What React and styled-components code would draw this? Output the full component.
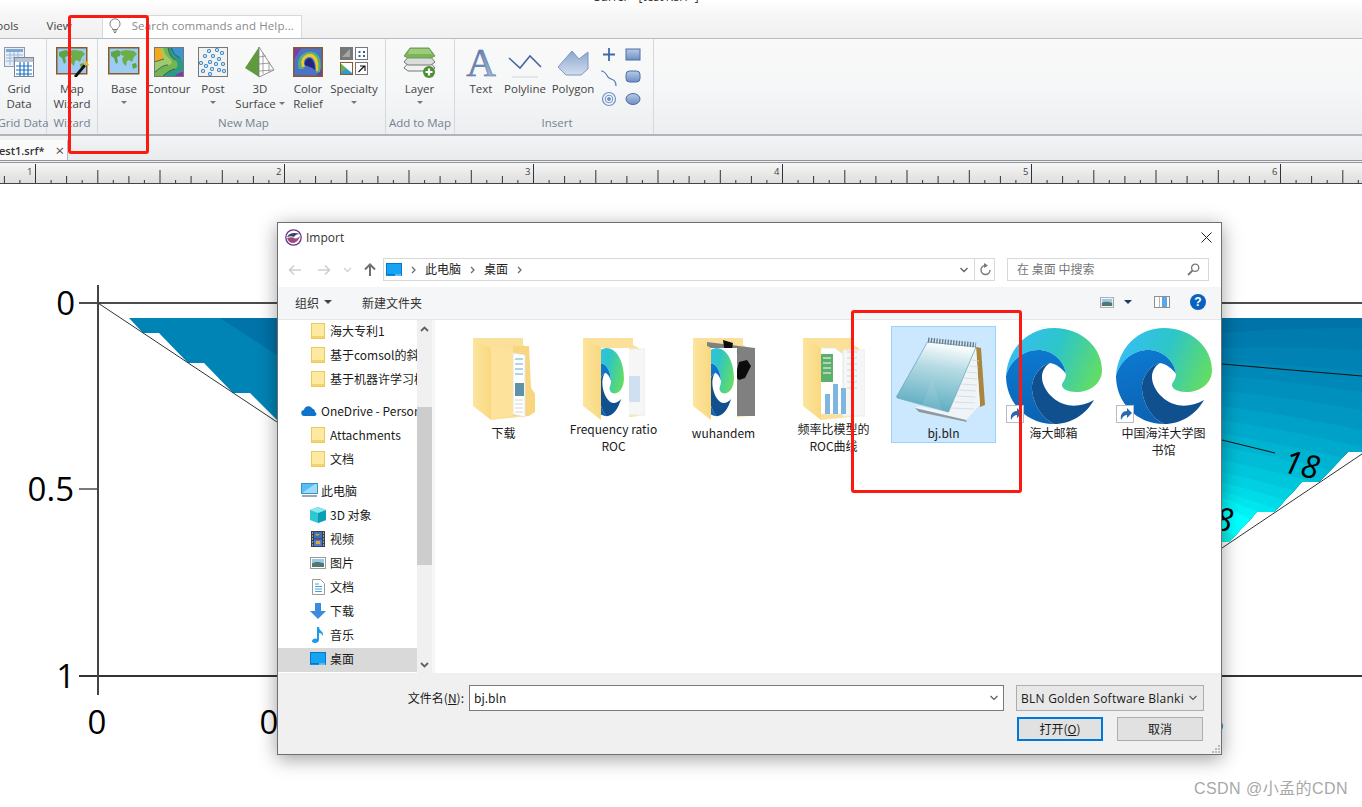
import React from 'react';
import styled, { createGlobalStyle } from 'styled-components';

const UI_FONT = '"Open Sans", "Noto Sans", "Noto Sans CJK SC", sans-serif';

const Global = createGlobalStyle`
    html, body {
        margin: 0;
        padding: 0;
        background: #fff;
        overflow: hidden;
    }
    * { box-sizing: border-box; }
    svg { display: block; flex: none; }
`;

/* ---------- little drawings ---------- */

const GridDataIcon = () => (
    <svg width="30" height="30" viewBox="0 0 30 30">
        <rect x="0.5" y="0.5" width="20" height="19" fill="#e8eef5" stroke="#8d99a8" />
        <rect x="2" y="2" width="17" height="3" fill="#7ea7d8" />
        <path d="M2 8h17M2 11h17M2 14h17M6 5v13M10 5v13M14 5v13" stroke="#9db9dc" />
        <rect x="10.5" y="10.5" width="19" height="19" fill="#fff" stroke="#7b8794" />
        <rect x="11" y="11" width="18" height="4" fill="#b9c4d0" />
        <path d="M12 19h16M12 23h16M12 27h16M16 15v14M20 15v14M24 15v14" stroke="#1d74c4" strokeWidth="1.2" />
    </svg>
);

const MapArt = () => (
    <>
        <rect x="0.75" y="0.75" width="30" height="26" fill="#9ccbf3" stroke="#8a5a2c" strokeWidth="1.5" />
        <path d="M3 5l7-2 3 2-1 4-3 1 1 5-2 2-2-6-3-2z" fill="#5fa443" />
        <path d="M13 4l5-1 8 1 3 3-3 3-2 5-3-2-2 1-1 5-3-3-1-4 2-3-3-1z" fill="#6cae48" />
        <path d="M24 17l4-1 1 4-4 2z" fill="#5fa443" />
    </>
);

const BaseMapIcon = () => (
    <svg width="32" height="28" viewBox="0 0 32 28"><MapArt /></svg>
);

const WizardIcon = () => (
    <WizardShift>
        <svg width="34" height="30" viewBox="0 0 34 30">
            <MapArt />
            <path d="M18 29l10-12 2 2-10 12z" fill="#111" />
            <path d="M27 17l3-3 2 2-2 3z" fill="#e8b428" />
            <path d="M27 12l1 2M32 13l-1 2M33 18l-2-1" stroke="#eeb020" />
        </svg>
    </WizardShift>
);

const ContourIcon = () => (
    <svg width="30" height="30" viewBox="0 0 30 30">
        <rect width="30" height="30" fill="#3d94cf" />
        <path d="M0 0h17c2 6 4 8 9 11 4 3 4 9 4 19H0z" fill="#2a9a85" />
        <path d="M0 0h14c1 7 3 10 7 13 4 3 3 8 0 9-5 1-9 4-13 8H0z" fill="#72b652" />
        <path d="M0 0h9c1 6 3 9 7 12 3 3 2 6-2 6-5 0-8 3-14 8z" fill="#9ecb6d" />
        <path d="M0 0h7c0 6 2 9 3 12-4 1-6 2-10 3z" fill="#f6a81c" />
        <path d="M20 30c2-3 6-5 10-5v5z" fill="#8f2cb8" />
        <path d="M0 15c4-1 6-2 10-3M0 26c6-5 9-8 14-8M8 30c4-4 8-7 13-8M14 0c1 7 3 10 7 13M17 0c2 6 4 8 9 11" stroke="#33495c" strokeWidth="0.8" fill="none" />
        <rect x="0.5" y="0.5" width="29" height="29" fill="none" stroke="#777" />
    </svg>
);

const PostIcon = () => {
    const dots = [[11, 4], [19, 3], [24, 6], [7, 9], [15, 9], [21, 12], [12, 15], [3, 16], [8, 19], [18, 17], [25, 17], [5, 24], [14, 22], [21, 23], [26, 24], [12, 27]];
    return (
        <svg width="30" height="30" viewBox="0 0 30 30">
            <rect x="0.5" y="0.5" width="29" height="29" fill="#f1f1ef" stroke="#777" />
            {dots.map(([x, y]) => (
                <circle key={x + '-' + y} cx={x} cy={y} r="1.5" fill="#fff" stroke="#2a80c8" strokeWidth="1.1" />
            ))}
        </svg>
    );
};

const SurfaceIcon = () => (
    <svg width="32" height="32" viewBox="0 0 32 32">
        <path d="M15 0L1 21l14 9z" fill="#5f9a3c" />
        <path d="M15 0l15 23-15 7z" fill="#fff" stroke="#777" strokeWidth="0.8" />
        <path d="M15 10l7-1M15 17l11-1M15 24l14-1M19 6v21M25 15v10" fill="none" stroke="#8a8a8a" strokeWidth="0.8" />
    </svg>
);

const ReliefIcon = () => (
    <svg width="30" height="30" viewBox="0 0 30 30">
        <rect width="30" height="30" fill="#3d5fc0" />
        <path d="M0 0h30v30H0z" fill="#4c72c8" />
        <path d="M0 0h9L0 14z" fill="#7a3fae" />
        <path d="M22 30l8-10v10z" fill="#6a3fb4" />
        <path d="M6 22C2 10 12 3 20 5c7 2 9 10 7 20l-4 1C24 16 22 9 16 9 10 10 9 16 11 22z" fill="#55b07a" />
        <path d="M9 20C6 11 13 6 19 7c6 2 7 9 6 17l-2 0C23 15 21 10 16 10 11 11 10 15 12 20z" fill="#e9c932" />
        <path d="M12 18c-1-4 2-7 5-7 3 1 5 6 5 12-3-3-6-3-10-5z" fill="#24267e" />
        <rect x="0.75" y="0.75" width="28.5" height="28.5" fill="none" stroke="#8a5a2c" strokeWidth="1.5" />
    </svg>
);

const SpecialtyIcon = () => (
    <svg width="29" height="28" viewBox="0 0 29 28">
        <rect x="0.5" y="0.5" width="12" height="12" fill="#777" stroke="#777" />
        <path d="M2 10l8-8v8z" fill="#a6a6a6" />
        <rect x="15.5" y="0.5" width="12" height="12" fill="#fff" stroke="#777" />
        <path d="M18.5 4h2v2h-2zM23 4h2v2h-2zM18.5 8h2v2h-2zM23 8h2v2h-2z" fill="#2268a8" />
        <rect x="0.5" y="15.5" width="12" height="12" fill="#fff" stroke="#8a5a2c" />
        <path d="M1 17l11 9v1H1z" fill="#2f9ad2" />
        <path d="M1 17l6 5-6 3z" fill="#6cb24a" />
        <rect x="15.5" y="15.5" width="12" height="12" fill="#fff" stroke="#777" />
        <path d="M18.5 25l6-6M20 19h5v5" stroke="#111" fill="none" strokeWidth="1.1" />
    </svg>
);

const LayerIcon = () => (
    <svg width="33" height="32" viewBox="0 0 33 32">
        <path d="M1 21l6-7h19l6 7-4 3H5z" fill="#f1f1f1" stroke="#777" />
        <path d="M1 15l6-7h19l6 7-4 3H5z" fill="#dcdcdc" stroke="#777" />
        <path d="M1 9l6-8h19l6 8-4 2H5z" fill="#7cb45a" stroke="#6d9c52" />
        <path d="M7 2h19l3 5H5z" fill="#9ccc7c" />
        <circle cx="26" cy="25" r="6" fill="#4f8f34" />
        <path d="M26 21.5v7M22.5 25h7" stroke="#fff" strokeWidth="2.2" />
    </svg>
);

const TextIcon = () => (
    <svg width="32" height="32" viewBox="0 0 32 32">
        <defs>
            <linearGradient id="glyph" x1="0" y1="0" x2="1" y2="1">
                <stop offset="0" stopColor="#3f5f98" />
                <stop offset="1" stopColor="#b6c8e4" />
            </linearGradient>
        </defs>
        <text x="16" y="29" textAnchor="middle" fontFamily='"Liberation Serif", serif' fontSize="41" fontWeight="400" fill="url(#glyph)" stroke="#466a9f" strokeWidth="0.5">A</text>
    </svg>
);

const PolylineIcon = () => (
    <svg width="34" height="32" viewBox="0 0 34 32">
        <path d="M1 11l11 10L22 9l11 11" fill="none" stroke="#46689e" strokeWidth="1.6" />
        <path d="M4 30h26" stroke="#dfe1e4" strokeWidth="1.5" />
    </svg>
);

const PolygonIcon = () => (
    <svg width="32" height="32" viewBox="0 0 32 32">
        <defs>
            <linearGradient id="poly" x1="0" y1="0" x2="0" y2="1">
                <stop offset="0" stopColor="#8ca5cf" />
                <stop offset="1" stopColor="#d2deef" />
            </linearGradient>
        </defs>
        <path d="M1 20L15 4l7 8 9-7v17l-7 6H9z" fill="url(#poly)" stroke="#7d97c2" />
    </svg>
);

const SmallShape = ({ kind }) => (
    <svg width="18" height="18" viewBox="0 0 18 18">
        <defs>
            <linearGradient id="shape" x1="0" y1="0" x2="0" y2="1">
                <stop offset="0" stopColor="#b8c9e6" />
                <stop offset="1" stopColor="#6f8fc4" />
            </linearGradient>
        </defs>
        {kind === 'plus' && <path d="M9 1v13M3 7.5h12" stroke="#3f6aa8" strokeWidth="1.8" />}
        {kind === 'curve' && <path d="M1 2c4 0 5 3 7 6s8 1 8 9" fill="none" stroke="#5578ad" strokeWidth="1.2" />}
        {kind === 'rings' && (
            <g fill="none" stroke="#6f92c8">
                <circle cx="9" cy="8" r="6.5" strokeWidth="1.2" />
                <circle cx="9" cy="8" r="3.8" />
                <circle cx="9" cy="8" r="1.5" fill="#6f92c8" />
            </g>
        )}
        {kind === 'rect' && <rect x="2" y="2" width="14" height="11" fill="url(#shape)" stroke="#4c6ea6" />}
        {kind === 'round' && <rect x="2" y="2" width="14" height="11" rx="3.5" fill="url(#shape)" stroke="#4c6ea6" />}
        {kind === 'oval' && <ellipse cx="9" cy="8" rx="7" ry="5.5" fill="url(#shape)" stroke="#4c6ea6" />}
    </svg>
);

const BulbIcon = () => (
    <svg width="12" height="15" viewBox="0 0 12 15">
        <path d="M3.5 10.5C2 9 1 8 1 5.8A5 5 0 0 1 11 5.8c0 2.2-1 3.2-2.5 4.7v1h-5zM4 13h4M5 14.5h2" fill="none" stroke="#7b7b7b" />
    </svg>
);

const AppLogo = () => (
    <svg width="17" height="17" viewBox="0 0 17 17">
        <circle cx="8.5" cy="8.5" r="7.7" fill="#fff" stroke="#66318c" strokeWidth="1.3" />
        <path d="M2 8c2-4 7-5 13-3-3 0-5 1-6 3-2-1-4-1-7 0z" fill="#39406e" />
        <path d="M2 9c3-1 6-1 7 0 2 1 4 0 6-2-1 4-4 7-7 7-3 0-5-2-6-5z" fill="#a04a78" />
    </svg>
);

const Monitor = ({ w = 16, h = 13 }) => (
    <svg width={w} height={h} viewBox="0 0 16 13">
        <rect width="16" height="13" fill="#0a8fe6" />
        <rect x="0.5" y="0.5" width="15" height="11" fill="#14a3f5" stroke="#0877c4" />
        <path d="M9 12h6" stroke="#cfe9fb" />
    </svg>
);

const PcIcon = () => (
    <svg width="17" height="15" viewBox="0 0 17 15">
        <rect x="0.5" y="0.5" width="16" height="10" fill="#55bdf7" stroke="#3f8fbf" />
        <path d="M1 10L14 1h2v9z" fill="#9bdcfb" />
        <rect x="1" y="12" width="15" height="2" fill="#9aa6b0" />
    </svg>
);

const OneDriveIcon = () => (
    <svg width="17" height="11" viewBox="0 0 17 11">
        <path d="M3.5 11A3 3 0 0 1 3 5a4.5 4.5 0 0 1 8.3-1.5A3.6 3.6 0 0 1 14 7a2.1 2.1 0 0 1 0 4z" fill="#0f74c9" />
    </svg>
);

const TreeFolder = () => (
    <svg width="14" height="16" viewBox="0 0 14 16">
        <rect x="0.5" y="0.5" width="13" height="15" fill="#fdeaa0" stroke="#ecc95c" />
        <rect x="1" y="13" width="12" height="2" fill="#f4d36c" />
    </svg>
);

const CubeIcon = () => (
    <svg width="16" height="16" viewBox="0 0 16 16">
        <path d="M8 0l8 3v10l-8 3-8-3V3z" fill="#2ec7d6" />
        <path d="M8 6l8-3v10l-8 3z" fill="#0c9fb4" />
        <path d="M8 0l8 3-8 3-8-3z" fill="#8ce6ee" />
    </svg>
);

const VideoIcon = () => (
    <svg width="14" height="16" viewBox="0 0 14 16">
        <rect width="14" height="16" fill="#3a3f47" />
        <rect x="3" y="1" width="8" height="6.5" fill="#3d6fc0" />
        <rect x="3" y="8.5" width="8" height="6.5" fill="#4a7fcf" />
        <path d="M4 3l2 2 3-2M5 10h4v3H5z" fill="#e2a63a" />
        <path d="M1 2h1M1 5h1M1 8h1M1 11h1M1 14h1M12 2h1M12 5h1M12 8h1M12 11h1M12 14h1" stroke="#fff" />
    </svg>
);

const PictureIcon = ({ w = 16, h = 12 }) => (
    <svg width={w} height={h} viewBox="0 0 16 12">
        <rect x="0.5" y="0.5" width="15" height="11" fill="#fff" stroke="#9a9a9a" />
        <rect x="2" y="2" width="12" height="4.5" fill="#9fc7ea" />
        <path d="M2 6.5c3-2 7-2 12 0V10H2z" fill="#4d7a6a" />
    </svg>
);

const DocIcon = () => (
    <svg width="13" height="16" viewBox="0 0 13 16">
        <path d="M0.5 0.5h8l4 4v11h-12z" fill="#fff" stroke="#9a9a9a" />
        <path d="M3 5h4M3 7.5h7M3 10h7M3 12.5h7" stroke="#4aa0d8" />
    </svg>
);

const DownloadIcon = () => (
    <svg width="16" height="16" viewBox="0 0 16 16">
        <path d="M5 0h6v8h5l-8 8-8-8h5z" fill="#3a8ddc" />
    </svg>
);

const MusicIcon = () => (
    <svg width="12" height="16" viewBox="0 0 12 16">
        <path d="M5 0h2c0 4 5 4 4 9-1-2-2-3-4-3v7c0 2-2 3-4 3s-3-1-3-2c0-2 3-3 5-2z" fill="#1e9be8" />
    </svg>
);

const Chevron = ({ up, color = '#555', w = 9, h = 6, sw = 1.4 }) => (
    <svg width={w} height={h} viewBox="0 0 9 6">
        <path d={up ? 'M1 5l3.5-3.5L8 5' : 'M1 1l3.5 3.5L8 1'} fill="none" stroke={color} strokeWidth={sw} />
    </svg>
);

const SmallArrow = ({ dir, color }) => (
    <svg width="14" height="12" viewBox="0 0 14 12">
        <path d={dir === 'left' ? 'M13 6H2M6 1.5L1.5 6 6 10.5' : dir === 'right' ? 'M1 6h11M8 1.5L12.5 6 8 10.5' : ''} fill="none" stroke={color} strokeWidth="1.6" />
    </svg>
);

const UpArrow = () => (
    <svg width="12" height="13" viewBox="0 0 12 13">
        <path d="M6 13V2M1 6.5L6 1.5l5 5" fill="none" stroke="#6f6f6f" strokeWidth="2" />
    </svg>
);

const CrumbArrow = () => (
    <svg width="5" height="8" viewBox="0 0 5 8">
        <path d="M1 1l3 3-3 3" fill="none" stroke="#6d6d6d" strokeWidth="1.3" />
    </svg>
);

const RefreshIcon = () => (
    <svg width="12" height="13" viewBox="0 0 12 13">
        <path d="M6.5 2.5A4.5 4.5 0 1 0 11 7" fill="none" stroke="#777" strokeWidth="1.4" />
        <path d="M5 0l4 2.5L5 5z" fill="#777" />
    </svg>
);

const SearchGlass = () => (
    <svg width="13" height="13" viewBox="0 0 13 13">
        <circle cx="8.2" cy="4.8" r="3.6" fill="none" stroke="#777" strokeWidth="1.3" />
        <path d="M5.5 7.5L1 12" stroke="#777" strokeWidth="1.8" />
    </svg>
);

const PaneIcon = () => (
    <svg width="16" height="12" viewBox="0 0 16 12">
        <rect x="0.5" y="0.5" width="15" height="11" fill="#fff" stroke="#8f8f8f" />
        <rect x="8" y="1" width="5" height="10" fill="#5aa6e6" />
        <path d="M5.5 1v10" stroke="#b5b5b5" />
    </svg>
);

const HelpIcon = () => (
    <svg width="16" height="16" viewBox="0 0 16 16">
        <circle cx="8" cy="8" r="8" fill="#0a62c0" />
        <text x="8" y="12.2" textAnchor="middle" fontFamily='"Liberation Sans", sans-serif' fontSize="12" fontWeight="700" fill="#fff">?</text>
    </svg>
);

const CloseIcon = () => (
    <svg width="11" height="11" viewBox="0 0 11 11">
        <path d="M0.5 0.5l10 10M10.5 0.5l-10 10" stroke="#222" />
    </svg>
);

/* the three parts of the browser logo, on a 96 unit square */
const EdgeArt = ({ id }) => (
    <>
        <defs>
            <linearGradient id={`${id}a`} x1="0" y1="0.3" x2="1" y2="0.6">
                <stop offset="0" stopColor="#36bdf6" />
                <stop offset="0.5" stopColor="#2dc6c8" />
                <stop offset="1" stopColor="#62dc66" />
            </linearGradient>
            <linearGradient id={`${id}b`} x1="0.2" y1="0" x2="0.4" y2="1">
                <stop offset="0" stopColor="#0c7ad2" />
                <stop offset="1" stopColor="#0c62b2" />
            </linearGradient>
        </defs>
        <path d="M0 48C2 20 22 0 48 0c28 0 48 20 48 42 0 14-12 22-26 22-8 0-14-3-14-7 0-3 4-5 4-11-2-14-14-24-28-24C20 22 5 30 0 48z" fill={`url(#${id}a)`} />
        <path d="M0 48C5 30 20 22 32 22c14 0 26 10 28 24-4-6-10-10-16-11-10 2-19 15-18 27 2 16 10 28 22 34C20 96 0 74 0 48z" fill={`url(#${id}b)`} />
        <path d="M44 35C34 37 25 50 26 62c2 16 10 28 22 34 18 0 32-10 40-24-10 6-22 7-30 4-12-4-22-16-22-27 0-6 3-11 8-14z" fill="#10508f" />
    </>
);

const EdgeIcon = ({ id }) => (
    <svg width="96" height="96" viewBox="0 0 96 96"><EdgeArt id={id} /></svg>
);

/* folder with whatever is filed in it */
const Folder = ({ id, children }) => (
    <svg width="62" height="82" viewBox="0 0 62 82">
        <defs>
            <linearGradient id={id} x1="0" y1="0" x2="1" y2="0">
                <stop offset="0" stopColor="#fde59e" />
                <stop offset="1" stopColor="#f9d880" />
            </linearGradient>
        </defs>
        <path d="M0 0h50v7l6 3v68L18 82z" fill="#fbe09a" />
        {children}
        <path d="M0 0l18 10v72L0 68z" fill={`url(#${id})`} />
    </svg>
);

/* logo thumbnail, squeezed sideways the way the folder preview shows it */
const FiledEdge = ({ id }) => (
    <g>
        <clipPath id={`${id}clip`}><rect x="14" y="0" width="40" height="82" /></clipPath>
        <g clipPath={`url(#${id}clip)`}>
            <g transform="translate(6.4 10) scale(0.36 0.71)"><EdgeArt id={id} /></g>
        </g>
    </g>
);

const PageLines = ({ x }) => (
    <g stroke="#bcd9ee" strokeWidth="1">
        {[14, 20, 26, 32, 38, 44, 50].map((y) => (
            <path key={y} d={`M${x} ${y}h10`} />
        ))}
    </g>
);

const DownloadFolder = () => (
    <Folder id="f1">
        <path d="M56 8l2 42 4 6v18l-6 4H40V8z" fill="#f8d67e" />
        <path d="M40 15l12 2v62l-12-3z" fill="#fff" stroke="#e4e4e4" />
        <g stroke="#5aa9dc">
            {[21, 26, 31, 36].map((y) => <path key={y} d={`M42 ${y}h8`} />)}
        </g>
        <rect x="42" y="45" width="9" height="13" fill="#5d92a8" />
        <g stroke="#d4d4d4">
            {[62, 66, 70, 74].map((y) => <path key={y} d={`M42 ${y}h8`} />)}
        </g>
        <path d="M8 5l32 9v62L18 82z" fill="#fce29a" />
    </Folder>
);

const RocFolder = () => (
    <Folder id="f2">
        <path d="M42 11h20v66H42z" fill="#f6f6f6" stroke="#ececec" />
        <rect x="46" y="38" width="11" height="26" fill="#cfe0f0" />
        <path d="M14 10h32v72H14z" fill="#fff" />
        <FiledEdge id="fe2" />
    </Folder>
);

const DemFolder = () => (
    <Folder id="f3">
        <path d="M14 4l48 6v68H14z" fill="#808080" />
        <path d="M30 2l10 3-1 6 6 3-5 2h-8zM46 24l8-2 4 6-2 4-4 8-6 2-4-4 2-6z" fill="#0c0c0c" />
        <path d="M14 10h30v72H14z" fill="#fff" />
        <FiledEdge id="fe3" />
    </Folder>
);

const ChartFolder = () => (
    <Folder id="f4">
        <path d="M40 12h22v66H40z" fill="#f6f6f6" stroke="#ececec" />
        <path d="M14 10h18l8 6v60H14z" fill="#fff" stroke="#e6e6e6" />
        <path d="M18 16h12v28H18z" fill="#5bb06c" />
        <path d="M20 20h8M20 25h8M20 30h8M20 35h8" stroke="#fff" />
        <path d="M22 56h5v20h-5zM30 46h5v30h-5zM38 50h5v26h-5z" fill="#7fb6e0" />
        <PageLines x="44" />
    </Folder>
);

const NotepadIcon = () => (
    <svg width="96" height="92" viewBox="0 0 96 92">
        <defs>
            <linearGradient id="padFace" x1="0.55" y1="0" x2="0.35" y2="1">
                <stop offset="0" stopColor="#ffffff" />
                <stop offset="0.35" stopColor="#b5dbe3" />
                <stop offset="1" stopColor="#58a9bf" />
            </linearGradient>
        </defs>
        <path d="M80 13l5 1 4 57-5 2z" fill="#a9853d" />
        <path d="M80 13l4 58-14 15-51-12 3-2 30 6z" fill="#f0f4f7" />
        <g stroke="#cdd8e1" strokeWidth="0.8">
            {[26, 32, 38, 44, 50, 56, 62, 68, 74].map((y, i) => (
                <path key={y} d={`M${76 - i * 2.6} ${y}L${83 - i * 0.6} ${y + 1}`} />
            ))}
        </g>
        <path d="M19 74l51 12 1 2-48-10z" fill="#8e9aa0" />
        <path d="M31.5 8L80 13 52.5 78 1.5 64c-1.5-1-1-2 0-3z" fill="url(#padFace)" stroke="#6fa9bb" strokeWidth="0.8" />
        <path d="M36 45l10 32-20-6z" fill="#fff" opacity="0.08" />
        <path d="M32 6l48 5" stroke="#6d7b85" strokeWidth="5" strokeDasharray="1.4 1.4" />
    </svg>
);

const ShortcutBadge = () => (
    <svg width="18" height="18" viewBox="0 0 18 18">
        <rect x="0.5" y="0.5" width="17" height="17" fill="#fff" stroke="#b9bcc0" />
        <path d="M5 15c-1-6 2-9 6-9V3l5 5-5 5v-3c-2 0-4 1-6 5z" fill="#2f69ad" />
    </svg>
);

const GripDots = () => (
    <svg width="9" height="9" viewBox="0 0 9 9">
        <path d="M7 1h2v2H7zM4 4h2v2H4zM7 4h2v2H7zM1 7h2v2H1zM4 7h2v2H4zM7 7h2v2H7z" fill="#bcbcbc" />
    </svg>
);

/* ---------- ruler and chart ---------- */

const RulerTicks = () => {
    const ticks = [];
    const step = 249 / 16;
    for (let i = -2; i < 88; i++) {
        const x = 35.5 + i * step;
        let h = 3;
        if (i % 16 === 0) h = 19;
        else if (i % 4 === 0) h = 13;
        else if (i % 2 === 0) h = 7;
        ticks.push(<path key={i} d={`M${x.toFixed(1)} 20v-${h}`} stroke="#333" strokeWidth="1" />);
    }
    return (
        <svg width="1362" height="20" viewBox="0 0 1362 20">
            {ticks}
            {[1, 2, 3, 4, 5, 6].map((n) => (
                <text key={n} x={35.5 + (n - 1) * 249 - 3} y="12" textAnchor="end" fontFamily='"Open Sans", sans-serif' fontSize="9.5" fill="#444">{n}</text>
            ))}
        </svg>
    );
};

const BANDS = [
    ['#0073a8', 318, 318],
    ['#007bae', 333, 328],
    ['#0082b4', 348, 350],
    ['#0089b8', 362, 372],
    ['#0090bd', 376, 392],
    ['#0098c2', 391, 410],
    ['#00a1c8', 406, 430],
    ['#00aacc', 420, 447],
    ['#00b3d0', 434, 462],
    ['#00bcd6', 447, 478],
    ['#00c6dc', 460, 495],
    ['#00d0e2', 472, 510],
    ['#00dbe8', 482, 525],
    ['#00e6ee', 491, 540],
    ['#00f2f5', 498, 555],
    ['#00ffff', 506, 575],
    ['#10efe6', 530, 600],
];

const PlotChart = () => (
    <svg width="1362" height="623" viewBox="0 184 1362 623">
        <defs>
            <clipPath id="plotClip">
                <path d="M1222 318H1362V452H1348L1319 482H1302L1274 512H1257L1229 542H1222z" />
            </clipPath>
        </defs>
        <path d="M129 318H280V423L277 420L250 393H233L204 363H188L159 333H143z" fill="#0083b5" />
        <path d="M220 318H280V357z" fill="#0073a8" />
        <g clipPath="url(#plotClip)">
            {BANDS.map(([color, a, b]) => (
                <path key={color} d={`M1222 ${a}Q1290 ${(a + b) / 2 - 3} 1362 ${b}V620H1222z`} fill={color} />
            ))}
        </g>
        <path d="M1222 364Q1290 370 1362 376" fill="none" stroke="#111" strokeWidth="1" />
        <path d="M1222 440L1275 453" fill="none" stroke="#111" strokeWidth="1" />
        <path d="M98 303L280 424M1222 548L1362 454" stroke="#333" strokeWidth="1" />
        <path d="M79 303H1362" stroke="#111" strokeWidth="1.4" />
        <path d="M79 489H98" stroke="#222" strokeWidth="1.2" />
        <path d="M79 676H1362" stroke="#333" strokeWidth="2" />
        <path d="M98 285V695" stroke="#444" strokeWidth="2" />
        <g fontFamily='"Open Sans", sans-serif' fontSize="33" fill="#000">
            <text x="75" y="315" textAnchor="end">0</text>
            <text x="74" y="501" textAnchor="end">0.5</text>
            <text x="75" y="688" textAnchor="end">1</text>
            <text x="97" y="734" textAnchor="middle">0</text>
            <text x="269" y="734" textAnchor="middle">0</text>
            <text x="1215" y="734" textAnchor="middle">5</text>
            <text fontStyle="italic" fontSize="32" transform="translate(1282 472) rotate(12)">18</text>
            <text fontStyle="italic" fontSize="32" transform="translate(1196 527) rotate(8)">18</text>
        </g>
    </svg>
);

/* ---------- data ---------- */

const TREE = [
    { label: '海大专利1', icon: <TreeFolder />, depth: 1 },
    { label: '基于comsol的斜坡稳定', icon: <TreeFolder />, depth: 1 },
    { label: '基于机器许学习模型', icon: <TreeFolder />, depth: 1 },
    { label: 'OneDrive - Personal', icon: <OneDriveIcon />, depth: 0, gap: true },
    { label: 'Attachments', icon: <TreeFolder />, depth: 1 },
    { label: '文档', icon: <TreeFolder />, depth: 1 },
    { label: '此电脑', icon: <PcIcon />, depth: 0, gap: true },
    { label: '3D 对象', icon: <CubeIcon />, depth: 1 },
    { label: '视频', icon: <VideoIcon />, depth: 1 },
    { label: '图片', icon: <PictureIcon />, depth: 1 },
    { label: '文档', icon: <DocIcon />, depth: 1 },
    { label: '下载', icon: <DownloadIcon />, depth: 1 },
    { label: '音乐', icon: <MusicIcon />, depth: 1 },
    { label: '桌面', icon: <Monitor />, depth: 1, selected: true },
];

const FILES = [
    { name: '下载', art: <DownloadFolder />, top: 10 },
    { name: 'Frequency ratio ROC', art: <RocFolder />, top: 10 },
    { name: 'wuhandem', art: <DemFolder />, top: 10 },
    { name: '频率比模型的 ROC曲线', art: <ChartFolder />, top: 10 },
    { name: 'bj.bln', art: <NotepadIcon />, top: 6, selected: true },
    { name: '海大邮箱', art: <EdgeIcon id="e1" />, top: 0, shortcut: true },
    { name: '中国海洋大学图书馆', art: <EdgeIcon id="e2" />, top: 0, shortcut: true },
];

export default function App() {
    return (
        <Page>
            <Global />
            <TitleBar><TitleText>Surfer - [test1.srf*]</TitleText></TitleBar>
            <TabStrip>
                <MenuTab $first>Tools</MenuTab>
                <MenuTab>View</MenuTab>
                <SearchBox><BulbIcon /><span>Search commands and Help...</span></SearchBox>
            </TabStrip>
            <Ribbon>
                <Group $w={47} $pad={0}>
                    <GroupBody>
                        <ToolButton $w={38}>
                            <ToolIcon><GridDataIcon /></ToolIcon>
                            <ToolLabel>Grid<br />Data</ToolLabel>
                        </ToolButton>
                    </GroupBody>
                    <GroupTitle>Grid Data</GroupTitle>
                </Group>
                <Group $w={51} $pad={0}>
                    <GroupBody>
                        <ToolButton $w={50}>
                            <ToolIcon><WizardIcon /></ToolIcon>
                            <ToolLabel>Map<br />Wizard</ToolLabel>
                        </ToolButton>
                    </GroupBody>
                    <GroupTitle>Wizard</GroupTitle>
                </Group>
                <Group $w={288} $pad={4}>
                    <GroupBody>
                        <ToolButton $w={44}>
                            <ToolIcon><BaseMapIcon /></ToolIcon>
                            <ToolLabel>Base</ToolLabel>
                            <Caret />
                        </ToolButton>
                        <ToolButton $w={45}>
                            <ToolIcon><ContourIcon /></ToolIcon>
                            <ToolLabel>Contour</ToolLabel>
                        </ToolButton>
                        <ToolButton $w={44}>
                            <ToolIcon><PostIcon /></ToolIcon>
                            <ToolLabel>Post</ToolLabel>
                            <Caret />
                        </ToolButton>
                        <ToolButton $w={50}>
                            <ToolIcon><SurfaceIcon /></ToolIcon>
                            <ToolLabel>3D<br />Surface <InlineCaret /></ToolLabel>
                        </ToolButton>
                        <ToolButton $w={46}>
                            <ToolIcon><ReliefIcon /></ToolIcon>
                            <ToolLabel>Color<br />Relief</ToolLabel>
                        </ToolButton>
                        <ToolButton $w={46}>
                            <ToolIcon><SpecialtyIcon /></ToolIcon>
                            <ToolLabel>Specialty</ToolLabel>
                            <Caret />
                        </ToolButton>
                    </GroupBody>
                    <GroupTitle>New Map</GroupTitle>
                </Group>
                <Group $w={69} $pad={0}>
                    <GroupBody>
                        <ToolButton $w={67}>
                            <ToolIcon><LayerIcon /></ToolIcon>
                            <ToolLabel>Layer</ToolLabel>
                            <Caret />
                        </ToolButton>
                    </GroupBody>
                    <GroupTitle>Add to Map</GroupTitle>
                </Group>
                <Group $w={199} $pad={6}>
                    <GroupBody>
                        <ToolButton $w={40}>
                            <ToolIcon><TextIcon /></ToolIcon>
                            <ToolLabel>Text</ToolLabel>
                        </ToolButton>
                        <ToolButton $w={48}>
                            <ToolIcon><PolylineIcon /></ToolIcon>
                            <ToolLabel>Polyline</ToolLabel>
                        </ToolButton>
                        <ToolButton $w={48}>
                            <ToolIcon><PolygonIcon /></ToolIcon>
                            <ToolLabel>Polygon</ToolLabel>
                        </ToolButton>
                        <ShapeColumn>
                            <SmallShape kind="plus" />
                            <SmallShape kind="curve" />
                            <SmallShape kind="rings" />
                        </ShapeColumn>
                        <ShapeColumn>
                            <SmallShape kind="rect" />
                            <SmallShape kind="round" />
                            <SmallShape kind="oval" />
                        </ShapeColumn>
                    </GroupBody>
                    <GroupTitle>Insert</GroupTitle>
                </Group>
            </Ribbon>
            <DocTabs>
                <DocTab><b>test1.srf*</b><CloseMark>×</CloseMark></DocTab>
            </DocTabs>
            <Ruler><RulerTicks /></Ruler>
            <Canvas>
                <PlotChart />
                <Dialog>
                    <DialogTitle>
                        <AppLogo />
                        <span>Import</span>
                        <CloseBtn><CloseIcon /></CloseBtn>
                    </DialogTitle>
                    <NavRow>
                        <NavSlot $ml={0}><SmallArrow dir="left" color="#cfcfcf" /></NavSlot>
                        <NavSlot $ml={15}><SmallArrow dir="right" color="#cfcfcf" /></NavSlot>
                        <NavSlot $ml={12}><Chevron color="#d2d2d2" /></NavSlot>
                        <NavSlot $ml={12}><UpArrow /></NavSlot>
                        <AddressBar>
                            <Monitor />
                            <CrumbGap><CrumbArrow /></CrumbGap>
                            <span>此电脑</span>
                            <CrumbGap><CrumbArrow /></CrumbGap>
                            <span>桌面</span>
                            <CrumbGap><CrumbArrow /></CrumbGap>
                            <AddressEnd>
                                <Chevron color="#666" w={10} />
                            </AddressEnd>
                            <RefreshSlot><RefreshIcon /></RefreshSlot>
                        </AddressBar>
                        <SearchField>
                            <span>在 桌面 中搜索</span>
                            <SearchGlass />
                        </SearchField>
                    </NavRow>
                    <Toolbar>
                        <ToolbarItem>组织<SmallCaret /></ToolbarItem>
                        <ToolbarItem $ml={30}>新建文件夹</ToolbarItem>
                        <ToolbarRight>
                            <PictureIcon w={14} h={11} />
                            <SmallCaret $dark />
                            <PaneSlot><PaneIcon /></PaneSlot>
                            <HelpIcon />
                        </ToolbarRight>
                    </Toolbar>
                    <DialogBody>
                        <Tree>
                            {TREE.map((row, i) => (
                                <TreeRow key={i} $depth={row.depth} $gap={row.gap} $selected={row.selected}>
                                    <TreeIcon>{row.icon}</TreeIcon>
                                    <span>{row.label}</span>
                                </TreeRow>
                            ))}
                        </Tree>
                        <ScrollBar>
                            <ScrollArrow><Chevron up color="#606060" w={9} h={6} sw={1.8} /></ScrollArrow>
                            <ScrollThumb />
                            <ScrollArrow><Chevron color="#606060" w={9} h={6} sw={1.8} /></ScrollArrow>
                        </ScrollBar>
                        <Gutter />
                        <FileGrid>
                            {FILES.map((file) => (
                                <FileItem key={file.name} $selected={file.selected}>
                                    <FileArt $top={file.top}>
                                        {file.art}
                                        {file.shortcut && <BadgeSpot><ShortcutBadge /></BadgeSpot>}
                                    </FileArt>
                                    <FileName>{file.name}</FileName>
                                </FileItem>
                            ))}
                        </FileGrid>
                    </DialogBody>
                    <DialogFooter>
                        <FooterRow>
                            <FieldLabel>文件名(<u>N</u>):</FieldLabel>
                            <NameInput>
                                <span>bj.bln</span>
                                <Chevron color="#555" w={10} sw={1.1} />
                            </NameInput>
                            <TypeSelect>
                                <span>BLN Golden Software Blanki</span>
                                <Chevron color="#555" w={10} sw={1.1} />
                            </TypeSelect>
                        </FooterRow>
                        <ButtonRow>
                            <DialogButton $primary>打开(<u>O</u>)</DialogButton>
                            <DialogButton>取消</DialogButton>
                        </ButtonRow>
                        <Grip><GripDots /></Grip>
                    </DialogFooter>
                </Dialog>
                <Watermark>CSDN @小孟的CDN</Watermark>
            </Canvas>
            <RedMark $x={68} $y={15} $w={81} $h={139} />
            <RedMark $x={851} $y={310} $w={171} $h={183} />
        </Page>
    );
}

/* ---------- styles ---------- */

const Page = styled.div`
    position: relative;
    width: 1362px;
    height: 807px;
    overflow: hidden;
    display: flex;
    flex-direction: column;
    background: #fff;
    font-family: ${UI_FONT};
    color: #333;
`;

const TitleBar = styled.div`
    height: 15px;
    flex: none;
    overflow: hidden;
    padding-left: 594px;
    background: linear-gradient(#ffffff, #f6f6f6);
`;

const TitleText = styled.div`
    margin-top: -11px;
    font-size: 12px;
    line-height: 16px;
    color: #333;
`;

const TabStrip = styled.div`
    height: 24px;
    flex: none;
    display: flex;
    align-items: stretch;
    overflow: hidden;
    background: linear-gradient(#f6f6f6, #f0f0f0);
    border-bottom: 1px solid #b8bcc2;
`;

const MenuTab = styled.div`
    margin-left: ${(p) => (p.$first ? '-10px' : '28px')};
    font-size: 11.5px;
    line-height: 22px;
    color: #444;
`;

const SearchBox = styled.div`
    width: 200px;
    margin-left: 30px;
    display: flex;
    align-items: center;
    gap: 11px;
    padding: 0 0 3px 6px;
    background: #fff;
    border: 1px solid #d8d8d8;
    border-bottom: none;
    font-size: 11.5px;
    letter-spacing: 0.1px;
    color: #8a8a8a;
`;

const Ribbon = styled.div`
    height: 97px;
    flex: none;
    display: flex;
    background: linear-gradient(#f9f9f9, #f6f7f8 50%, #eceef1);
    border-bottom: 2px solid #b1b4b9;
`;

const Group = styled.div`
    width: ${(p) => p.$w}px;
    padding: 0 0 3px ${(p) => p.$pad}px;
    display: flex;
    flex-direction: column;
    border-right: 1px solid #d5d8dc;
`;

const GroupBody = styled.div`
    flex: 1;
    display: flex;
`;

const GroupTitle = styled.div`
    white-space: nowrap;
    display: flex;
    justify-content: center;
    font-size: 11.5px;
    line-height: 16px;
    color: #76808f;
`;

const ToolButton = styled.div`
    width: ${(p) => p.$w}px;
    padding-top: 8px;
    display: flex;
    flex-direction: column;
    align-items: center;
`;

const ToolIcon = styled.div`
    height: 30px;
    display: flex;
    align-items: flex-start;
    justify-content: center;
`;

const WizardShift = styled.div`
    margin-left: 2px;
`;

const ToolLabel = styled.div`
    margin-top: 4px;
    font-size: 11.5px;
    line-height: 15px;
    color: #444;
    text-align: center;
    white-space: nowrap;
`;

const Caret = styled.span`
    margin-top: 5px;
    width: 0;
    height: 0;
    border-left: 3px solid transparent;
    border-right: 3px solid transparent;
    border-top: 3px solid #777;
`;

const InlineCaret = styled(Caret)`
    display: inline-block;
    margin: 0 0 2px 0;
    vertical-align: middle;
`;

const ShapeColumn = styled.div`
    width: 24px;
    padding-top: 8px;
    display: flex;
    flex-direction: column;
    align-items: center;
    gap: 4px;
`;

const DocTabs = styled.div`
    height: 27px;
    flex: none;
    display: flex;
    background: linear-gradient(#f2f3f5, #e9eaec);
    border-bottom: 3px double #8f9297;
`;

const DocTab = styled.div`
    width: 68px;
    margin-top: 4px;
    display: flex;
    align-items: center;
    justify-content: flex-end;
    gap: 11px;
    padding-right: 3px;
    overflow: hidden;
    white-space: nowrap;
    background: #fafafa;
    border-right: 1px solid #b5b8bd;
    font-size: 11px;
    color: #333;
    b { font-weight: 600; }
`;

const CloseMark = styled.span`
    font-size: 15px;
    line-height: 15px;
    color: #555;
`;

const Ruler = styled.div`
    height: 21px;
    flex: none;
    display: flex;
    background: linear-gradient(#f6f6f6, #dedede);
    border-bottom: 1px solid #444;
`;

const Canvas = styled.div`
    position: relative;
    flex: 1;
    min-height: 0;
    background: #fff;
`;

const Dialog = styled.div`
    position: absolute;
    left: 277px;
    top: 38px;
    width: 945px;
    height: 533px;
    display: flex;
    flex-direction: column;
    background: #fff;
    border: 1px solid #6f6f6f;
    box-shadow: 0 4px 18px rgba(0, 0, 0, 0.38);
    font-family: "Noto Sans CJK SC", "Open Sans", sans-serif;
    font-size: 12px;
    color: #1a1a1a;
`;

const DialogTitle = styled.div`
    height: 30px;
    flex: none;
    padding: 0 9px 2px 7px;
    display: flex;
    align-items: center;
    gap: 4px;
    font-family: "Open Sans", sans-serif;
    font-size: 12px;
    color: #333;
`;

const CloseBtn = styled.div`
    margin-left: auto;
    display: flex;
`;

const NavRow = styled.div`
    height: 23px;
    flex: none;
    margin-top: 5px;
    padding-left: 10px;
    display: flex;
    align-items: center;
`;

const NavSlot = styled.div`
    margin-left: ${(p) => p.$ml}px;
    display: flex;
`;

const AddressBar = styled.div`
    width: 612px;
    height: 23px;
    margin-left: 7px;
    padding-left: 2px;
    display: flex;
    align-items: center;
    border: 1px solid #d9d9d9;
    color: #222;
    span { padding-bottom: 2px; }
`;

const CrumbGap = styled.div`
    width: 23px;
    display: flex;
    justify-content: center;
`;

const AddressEnd = styled.div`
    margin-left: auto;
    padding-right: 5px;
    display: flex;
`;

const RefreshSlot = styled.div`
    width: 20px;
    height: 100%;
    display: flex;
    align-items: center;
    justify-content: center;
    border-left: 1px solid #d9d9d9;
`;

const SearchField = styled.div`
    width: 202px;
    height: 23px;
    margin-left: 12px;
    padding: 0 8px 0 9px;
    display: flex;
    align-items: center;
    justify-content: space-between;
    border: 1px solid #d9d9d9;
    color: #777;
    span { padding-bottom: 2px; }
`;

const Toolbar = styled.div`
    height: 33px;
    flex: none;
    margin-top: 6px;
    padding: 0 0 2px 17px;
    display: flex;
    align-items: center;
    background: #f5f6f7;
    border-bottom: 1px solid #e6e7e8;
    color: #333;
`;

const ToolbarItem = styled.div`
    margin-left: ${(p) => p.$ml || 0}px;
    display: flex;
    align-items: center;
`;

const SmallCaret = styled.span`
    margin-left: ${(p) => (p.$dark ? '10px' : '5px')};
    width: 0;
    height: 0;
    border-left: 4px solid transparent;
    border-right: 4px solid transparent;
    border-top: 4px solid ${(p) => (p.$dark ? '#1f3a5f' : '#444')};
`;

const ToolbarRight = styled.div`
    margin-left: auto;
    padding-right: 15px;
    display: flex;
    align-items: center;
`;

const PaneSlot = styled.div`
    margin: 0 20px 0 22px;
    display: flex;
`;

const DialogBody = styled.div`
    height: 353px;
    flex: none;
    display: flex;
    overflow: hidden;
`;

const Tree = styled.div`
    width: 139px;
    flex: none;
    overflow: hidden;
`;

const TreeRow = styled.div`
    height: 24px;
    margin-top: ${(p) => (p.$gap ? '8px' : '0')};
    padding: 0 0 3px ${(p) => (p.$depth ? '32px' : '23px')};
    display: flex;
    align-items: center;
    white-space: nowrap;
    color: #1a1a1a;
    background: ${(p) => (p.$selected ? '#d9d9d9' : 'transparent')};
`;

const TreeIcon = styled.div`
    width: 16px;
    margin-right: 4px;
    flex: none;
    display: flex;
    justify-content: center;
`;

const ScrollBar = styled.div`
    width: 15px;
    flex: none;
    display: flex;
    flex-direction: column;
    background: #f0f0f0;
`;

const ScrollArrow = styled.div`
    height: 17px;
    flex: none;
    display: flex;
    align-items: center;
    justify-content: center;
`;

const ScrollThumb = styled.div`
    height: 158px;
    margin-top: 70px;
    margin-bottom: auto;
    background: #cdcdcd;
`;

const Gutter = styled.div`
    width: 3px;
    flex: none;
    background: #f6f6f6;
`;

const FileGrid = styled.div`
    flex: 1;
    padding: 6px 0 0 16px;
    display: flex;
    align-items: flex-start;
    gap: 5px;
`;

const FileItem = styled.div`
    width: 105px;
    height: 117px;
    flex: none;
    padding-top: 2px;
    display: flex;
    flex-direction: column;
    align-items: center;
    background: ${(p) => (p.$selected ? '#cce8ff' : 'transparent')};
    outline: ${(p) => (p.$selected ? '1px solid #99d1ff' : 'none')};
    outline-offset: -1px;
`;

const FileArt = styled.div`
    position: relative;
    height: 96px;
    padding-top: ${(p) => p.$top}px;
    display: flex;
    align-items: flex-start;
    justify-content: center;
`;

const BadgeSpot = styled.div`
    position: absolute;
    left: 0;
    top: 77px;
    display: flex;
`;

const FileName = styled.div`
    width: 94px;
    text-align: center;
    font-size: 12px;
    line-height: 17px;
    color: #1a1a1a;
`;

const DialogFooter = styled.div`
    position: relative;
    flex: 1;
    padding: 12px 17px 0 0;
    background: #f0f0f0;
`;

const FooterRow = styled.div`
    display: flex;
    align-items: center;
    justify-content: flex-end;
`;

const FieldLabel = styled.div`
    margin-right: 5px;
    padding-bottom: 2px;
    color: #1a1a1a;
`;

const NameInput = styled.div`
    width: 535px;
    height: 26px;
    padding: 0 4px 0 4px;
    display: flex;
    align-items: center;
    justify-content: space-between;
    background: #fff;
    border: 1px solid #7a7a7a;
    span { padding-bottom: 2px; }
`;

const TypeSelect = styled.div`
    width: 188px;
    height: 26px;
    margin-left: 12px;
    padding: 0 5px 0 4px;
    display: flex;
    align-items: center;
    justify-content: space-between;
    white-space: nowrap;
    background: #e8e8e8;
    border: 1px solid #adadad;
    font-family: "Open Sans", sans-serif;
    font-size: 12px;
    letter-spacing: 0.24px;
`;

const ButtonRow = styled.div`
    margin-top: 6px;
    padding-right: 1px;
    display: flex;
    justify-content: flex-end;
    gap: 14px;
`;

const DialogButton = styled.div`
    width: 86px;
    height: 24px;
    padding-bottom: 1px;
    display: flex;
    align-items: center;
    justify-content: center;
    background: #e1e1e1;
    border: ${(p) => (p.$primary ? '2px solid #0078d7' : '1px solid #adadad')};
`;

const Grip = styled.div`
    position: absolute;
    right: 1px;
    bottom: 1px;
    display: flex;
`;

const Watermark = styled.div`
    position: absolute;
    right: 14px;
    bottom: 8px;
    font-family: "Liberation Sans", "Noto Sans CJK SC", sans-serif;
    font-size: 16px;
    line-height: 20px;
    letter-spacing: 0.45px;
    color: #a8a8a8;
`;

const RedMark = styled.div`
    position: absolute;
    left: ${(p) => p.$x}px;
    top: ${(p) => p.$y}px;
    width: ${(p) => p.$w}px;
    height: ${(p) => p.$h}px;
    border: 3px solid #fb1a12;
    border-radius: 3px;
`;
